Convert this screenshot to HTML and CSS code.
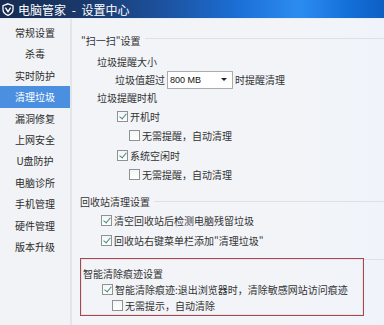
FILE: index.html
```html
<!DOCTYPE html>
<html lang="zh-CN">
<head>
    <meta charset="UTF-8">
    <title>电脑管家 - 设置中心</title>
    <link rel="stylesheet" href="styles.css">
</head>
<body>

<div class="window">
    <div class="titlebar">
        <svg class="logo" width="12" height="13" viewBox="0 0 12 13">
            <path d="M6 0.8 L11 2.6 L11 6.5 C11 9.4 8.8 11.3 6 12.4 C3.2 11.3 1 9.4 1 6.5 L1 2.6 Z" fill="none" stroke="#fff" stroke-width="1.3"/>
            <path d="M3.4 4.6 L6 8.6 L8.6 4.6" fill="none" stroke="#fff" stroke-width="1.4"/>
        </svg>
        <span class="title-text">电脑管家 - 设置中心</span>
    </div>

    <div class="main">
        <!-- left menu -->
        <ul class="sidebar">
            <li>常规设置</li>
            <li>杀毒</li>
            <li>实时防护</li>
            <li class="active">清理垃圾</li>
            <li>漏洞修复</li>
            <li>上网安全</li>
            <li>U盘防护</li>
            <li>电脑诊所</li>
            <li>手机管理</li>
            <li>硬件管理</li>
            <li>版本升级</li>
        </ul>

        <div class="content">
            <div class="group-title first">"扫一扫"设置</div>
            <div class="row lv1 tight">垃圾提醒大小</div>
            <div class="row lv2 tight">
                垃圾值超过
                <div class="select"><span>800 MB</span><i class="arrow"></i></div>
                时提醒清理
            </div>
            <div class="row lv1 tight">垃圾提醒时机</div>
            <div class="row lv2b"><span class="check on"></span>开机时</div>
            <div class="row lv3"><span class="check"></span>无需提醒，自动清理</div>
            <div class="row lv2b"><span class="check on"></span>系统空闲时</div>
            <div class="row lv3"><span class="check"></span>无需提醒，自动清理</div>

            <div class="group-title second">回收站清理设置</div>
            <div class="row lvc"><span class="check on"></span>清空回收站后检测电脑残留垃圾</div>
            <div class="row lvc"><span class="check on"></span>回收站右键菜单栏添加"清理垃圾"</div>

            <div class="boxline">
                <div class="redbox">
                    <div class="row small">智能清除痕迹设置</div>
                    <div class="row small in1"><span class="check on"></span>智能清除痕迹:退出浏览器时，清除敏感网站访问痕迹</div>
                    <div class="row small in2"><span class="check"></span>无需提示，自动清除</div>
                </div>
                <div class="tail"></div>
            </div>
        </div>
    </div>
</div>

</body>
</html>
```

FILE: styles.css
```css
body {
    margin: 0;
    padding: 0;
    font-family: "Noto Sans CJK SC", "Noto Sans", sans-serif;
    font-size: 10px;
    color: #333;
}
.window {
    width: 384px;
    height: 325px;
    overflow: hidden;
    background: #f2f4f8;
}
.titlebar {
    height: 18px;
    display: flex;
    align-items: center;
    gap: 4px;
    padding-left: 2px;
    color: #fff;
    font-size: 12px;
    border-bottom: 1px solid #e8eef6;
    background: linear-gradient(90deg, #172c50 0%, #1a396b 22%, #1d55a5 45%, #1b6fd6 62%, #2d8cf0 78%, #1471da 90%, #0e5fc4 100%);
}
.title-text {
    word-spacing: 3px;
}
.logo {
    flex: none;
}
.main {
    display: flex;
    height: 306px;
}
.sidebar {
    list-style: none;
    margin: 0;
    padding: 3px 0 0 0;
    width: 70px;
    flex: none;
    background: #f1f3f6;
    border-right: 2px solid #e2e5ea;
}
.sidebar li {
    height: 21.4px;
    line-height: 21.4px;
    text-align: center;
    color: #2b2b2b;
}
.sidebar li.active {
    background: #4a8fe0;
    color: #fff;
}
.content {
    flex: 1;
    padding: 12px 0 0 9px;
    background: linear-gradient(90deg, #f2f4f8 0%, #f2f4f8 70%, #f0f4fa 100%);
}
.group-title {
    display: flex;
    align-items: center;
    height: 19.5px;
    gap: 4px;
}
.group-title::after {
    content: "";
    flex: 1;
    height: 1px;
    background: #dde0e5;
}
.group-title.first {
    margin-bottom: 2px;
}
.group-title.first::after {
    margin-bottom: 4px;
}
.group-title.second {
    margin-top: 7px;
    margin-left: -1px;
}
.row {
    display: flex;
    align-items: center;
    height: 19.5px;
    white-space: nowrap;
}
.row.tight {
    height: 18px;
}
.lv1 { padding-left: 16px; }
.lv2 { padding-left: 34px; }
.lv2b { padding-left: 36px; }
.lv3 { padding-left: 48px; }
.lvc { padding-left: 20px; }

.select {
    width: 66px;
    height: 18px;
    margin: 0 2px 0 2px;
    border: 1px solid #a9abae;
    background: #fff;
    display: flex;
    align-items: center;
    justify-content: space-between;
    padding: 0 5px 0 2px;
    box-sizing: border-box;
    font-family: "Liberation Sans", sans-serif;
    font-size: 9px;
    color: #111;
}
.arrow {
    width: 0;
    height: 0;
    border-left: 3px solid transparent;
    border-right: 3px solid transparent;
    border-top: 3px solid #222;
}

.check {
    width: 9px;
    height: 9px;
    border: 1px solid #8f9194;
    background: linear-gradient(#f4f5f6, #fff);
    margin-right: 2px;
    flex: none;
    position: relative;
}
.check.on::after {
    content: "";
    position: absolute;
    left: 3px;
    top: 0;
    width: 3px;
    height: 6px;
    border-right: 1.5px solid #3e8f73;
    border-bottom: 1.5px solid #3e8f73;
    transform: rotate(40deg);
}

.boxline {
    display: flex;
    margin-top: 8px;
    margin-left: -1px;
}
.redbox {
    width: 280px;
    flex: none;
    border: 1px solid #9a4d58;
    box-shadow: inset 0 0 0 1px #f3dfe2;
    padding: 6px 0 2px 2px;
}
.tail {
    flex: 1;
    height: 1px;
    margin-top: 1px;
    background: #dde0e5;
}
.row.small {
    height: 16px;
}
.in1 { padding-left: 19px; }
.in2 { padding-left: 29px; }
```
